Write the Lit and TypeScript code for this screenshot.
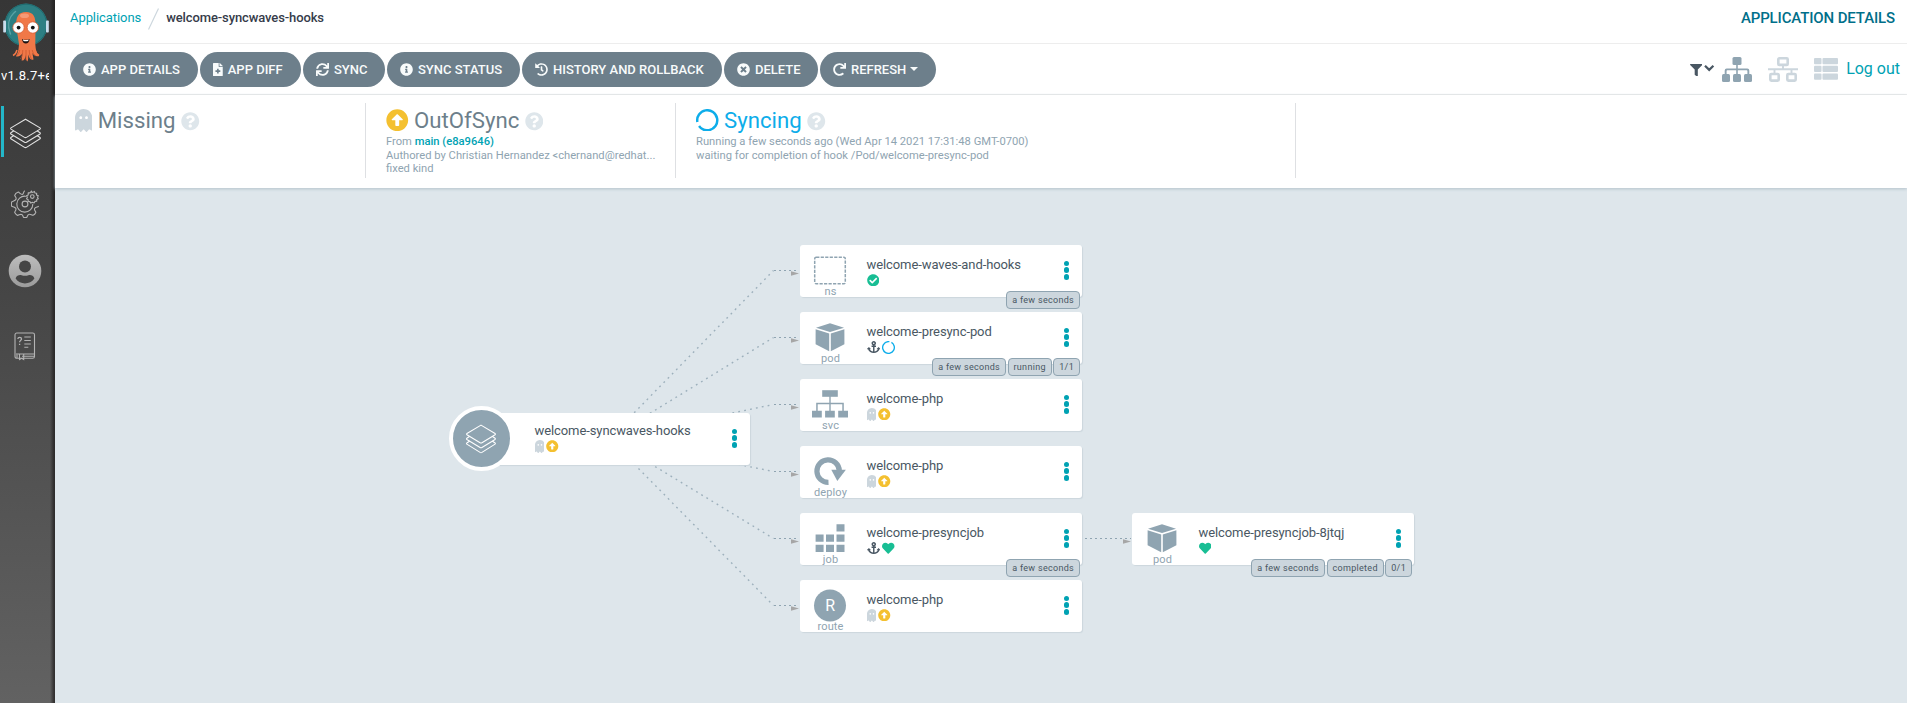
import { LitElement, html, css, svg } from "lit";
import { customElement, property } from "lit/decorators.js";

const ICONS: Record<string, [number, string]> = {
  info: [512, "M256 8C119.043 8 8 119.083 8 256c0 136.997 111.043 248 248 248s248-111.003 248-248C504 119.083 392.957 8 256 8zm0 110c23.196 0 42 18.804 42 42s-18.804 42-42 42-42-18.804-42-42 18.804-42 42-42zm56 254c0 6.627-5.373 12-12 12h-88c-6.627 0-12-5.373-12-12v-24c0-6.627 5.373-12 12-12h12v-64h-12c-6.627 0-12-5.373-12-12v-24c0-6.627 5.373-12 12-12h64c6.627 0 12 5.373 12 12v100h12c6.627 0 12 5.373 12 12v24z"],
  question: [512, "M504 256c0 136.997-111.043 248-248 248S8 392.997 8 256C8 119.083 119.043 8 256 8s248 111.083 248 248zM262.655 90c-54.497 0-89.255 22.957-116.549 63.758-3.536 5.286-2.353 12.415 2.715 16.258l34.699 26.31c5.205 3.947 12.621 3.008 16.665-2.122 17.864-22.658 30.113-35.797 57.303-35.797 20.429 0 45.698 13.148 45.698 32.958 0 14.976-12.363 22.667-32.534 33.976C247.128 238.528 216 254.941 216 296v4c0 6.627 5.373 12 12 12h56c6.627 0 12-5.373 12-12v-1.333c0-28.462 83.186-29.647 83.186-106.667 0-58.002-60.165-102-116.531-102zM256 338c-25.365 0-46 20.635-46 46 0 25.364 20.635 46 46 46s46-20.636 46-46c0-25.365-20.635-46-46-46z"],
  times: [512, "M256 8C119 8 8 119 8 256s111 248 248 248 248-111 248-248S393 8 256 8zm121.6 313.1c4.7 4.7 4.7 12.3 0 17L338 377.6c-4.7 4.7-12.3 4.7-17 0L256 312l-65.1 65.6c-4.7 4.7-12.3 4.7-17 0L134.4 338c-4.7-4.7-4.7-12.3 0-17l65.6-65-65.6-65.1c-4.7-4.7-4.7-12.3 0-17l39.6-39.6c4.7-4.7 12.3-4.7 17 0l65 65.7 65.1-65.6c4.7-4.7 12.3-4.7 17 0l39.6 39.6c4.7 4.7 4.7 12.3 0 17L312 256l65.6 65.1z"],
  up: [512, "M8 256C8 119 119 8 256 8s248 111 248 248-111 248-248 248S8 393 8 256zm292 116V256h70.9c10.7 0 16.1-13 8.5-20.5L264.5 121.2c-4.7-4.7-12.2-4.7-16.9 0l-115 114.3c-7.6 7.6-2.2 20.5 8.5 20.5H212v116c0 6.6 5.4 12 12 12h64c6.6 0 12-5.4 12-12z"],
  check: [512, "M504 256c0 136.967-111.033 248-248 248S8 392.967 8 256 119.033 8 256 8s248 111.033 248 248zM227.314 387.314l184-184c6.248-6.248 6.248-16.379 0-22.627l-22.627-22.627c-6.248-6.249-16.379-6.249-22.628 0L216 308.118l-70.059-70.059c-6.248-6.248-16.379-6.248-22.628 0l-22.627 22.627c-6.248 6.248-6.248 16.379 0 22.627l104 104c6.249 6.249 16.379 6.249 22.628.001z"],
  heart: [512, "M462.3 62.6C407.5 15.9 326 24.3 275.7 76.2L256 96.5l-19.7-20.3C186.1 24.3 104.5 15.9 49.7 62.6c-62.8 53.6-66.1 149.8-9.9 207.9l193.5 199.8c12.5 12.9 32.8 12.9 45.3 0l193.5-199.8c56.3-58.1 53-154.3-9.8-207.9z"],
  anchor: [576, "M12.971 352h32.394C67.172 454.735 181.944 512 288 512c106.229 0 220.853-57.38 242.635-160h32.394c10.691 0 16.045-12.926 8.485-20.485l-67.029-67.029c-4.686-4.686-12.284-4.686-16.971 0l-67.029 67.029c-7.56 7.56-2.206 20.485 8.485 20.485h35.146c-20.29 54.317-84.963 86.588-144.117 94.015V256h52c6.627 0 12-5.373 12-12v-40c0-6.627-5.373-12-12-12h-52v-5.47c37.281-13.226 63.963-48.97 63.996-90.919C384.033 43.24 341.25.133 288.879.001 236.227-.132 193.504 42.511 193.504 95.132c0 42.296 26.994 78.295 64.496 91.398V192h-52c-6.627 0-12 5.373-12 12v40c0 6.627 5.373 12 12 12h52v190.015c-58.936-7.399-123.82-39.679-144.117-94.015h35.146c10.691 0 16.045-12.926 8.485-20.485l-67.029-67.029c-4.686-4.686-12.284-4.686-16.971 0L4.485 331.515C-3.074 339.074 2.28 352 12.971 352zM288 64c17.645 0 32 14.355 32 32s-14.355 32-32 32-32-14.355-32-32 14.355-32 32-32z"],
  ghost: [384, "M186.1.09C81.01 3.24 0 94.92 0 200.05v263.92c0 14.26 17.23 21.39 27.31 11.31l24.92-18.53c6.66-4.95 16-3.99 21.51 2.21l42.95 48.35c6.25 6.25 16.38 6.25 22.63 0l40.72-45.85c6.37-7.17 17.56-7.17 23.92 0l40.72 45.85c6.25 6.25 16.38 6.25 22.63 0l42.95-48.35c5.51-6.2 14.85-7.17 21.51-2.21l24.92 18.53c10.08 10.08 27.31 2.94 27.31-11.31V192C384 84 294.83-3.17 186.1.09zM128 224c-17.67 0-32-14.33-32-32s14.33-32 32-32 32 14.33 32 32-14.33 32-32 32zm128 0c-17.67 0-32-14.33-32-32s14.33-32 32-32 32 14.33 32 32-14.33 32-32 32z"],
  file: [384, "M377 105L279.1 7c-4.5-4.5-10.6-7-17-7H256v128h128v-6.1c0-6.3-2.5-12.4-7-16.9zm-153 31V0H24C10.7 0 0 10.7 0 24v464c0 13.3 10.7 24 24 24h336c13.3 0 24-10.7 24-24V160H248c-13.2 0-24-10.8-24-24zm64 160v48c0 4.400-3.600 8-8 8h-56v56c0 4.400-3.600 8-8 8h-48c-4.400 0-8-3.600-8-8v-56h-56c-4.400 0-8-3.600-8-8v-48c0-4.400 3.600-8 8-8h56v-56c0-4.400 3.600-8 8-8h48c4.400 0 8 3.600 8 8v56h56c4.400 0 8 3.600 8 8z"],
  sync: [512, "M440.65 12.57l4 82.77A247.16 247.16 0 0 0 255.83 8C134.73 8 33.91 94.92 12.29 209.82A12 12 0 0 0 24.09 224h49.05a12 12 0 0 0 11.67-9.26 175.91 175.91 0 0 1 317-56.94l-101.46-4.86a12 12 0 0 0-12.57 12v47.41a12 12 0 0 0 12 12H500a12 12 0 0 0 12-12V12a12 12 0 0 0-12-12h-47.37a12 12 0 0 0-11.98 12.57zM255.83 432a175.61 175.61 0 0 1-146-77.8l101.8 4.87a12 12 0 0 0 12.57-12v-47.4a12 12 0 0 0-12-12H12a12 12 0 0 0-12 12V500a12 12 0 0 0 12 12h47.35a12 12 0 0 0 12-12.6l-4.15-82.57A247.17 247.17 0 0 0 255.83 504c121.11 0 221.93-86.92 243.55-201.82a12 12 0 0 0-11.8-14.18h-49.05a12 12 0 0 0-11.67 9.26A175.86 175.86 0 0 1 255.83 432z"],
  redo: [512, "M500.33 0h-47.41a12 12 0 0 0-12 12.57l4 82.76A247.42 247.42 0 0 0 256 8C119.34 8 7.9 119.53 8 256.19 8.1 393.07 119.1 504 256 504a247.1 247.1 0 0 0 166.18-63.91 12 12 0 0 0 .48-17.43l-34-34a12 12 0 0 0-16.38-.55A176 176 0 1 1 402.1 157.8l-101.53-4.87a12 12 0 0 0-12.57 12v47.41a12 12 0 0 0 12 12h200.33a12 12 0 0 0 12-12V12a12 12 0 0 0-12-12z"],
  history: [512, "M504 255.531c.253 136.64-111.18 248.372-247.82 248.468-59.015.042-113.223-20.53-155.822-54.911-11.077-8.94-11.905-25.541-1.839-35.607l11.267-11.267c8.609-8.609 22.353-9.551 31.891-1.984C173.062 425.135 212.781 440 256 440c101.705 0 184-82.311 184-184 0-101.705-82.311-184-184-184-48.814 0-93.149 18.969-126.068 49.932l50.754 50.754c10.08 10.08 2.941 27.314-11.313 27.314H24c-8.837 0-16-7.163-16-16V38.627c0-14.254 17.234-21.393 27.314-11.314l49.372 49.372C129.209 34.136 189.552 8 256 8c136.81 0 247.747 110.78 248 247.531zm-180.912 78.784l9.823-12.63c8.138-10.463 6.253-25.542-4.21-33.679L288 256.349V152c0-13.255-10.745-24-24-24h-16c-13.255 0-24 10.745-24 24v135.651l65.409 50.874c10.463 8.137 25.541 6.253 33.679-4.21z"],
  filter: [512, "M487.976 0H24.028C2.71 0-8.047 25.866 7.058 40.971L192 225.941V432c0 7.831 3.821 15.17 10.237 19.662l80 55.98C298.02 518.69 320 507.493 320 487.98V225.941l184.947-184.97C520.021 25.896 509.338 0 487.976 0z"],
};

const icon = (name: string, size: number, cls = "") => {
  const [w, d] = ICONS[name];
  return html`<svg class=${"ic " + cls} width=${(size * w) / 512} height=${size} viewBox="0 0 ${w} 512"><path fill="currentColor" d=${d} /></svg>`;
};

const ring = (size: number, sw: number, cls = "", dash = "92 8", rot = 160) => html`
  <svg class=${"ic " + cls} width=${size} height=${size} viewBox="0 0 24 24">
    <circle cx="12" cy="12" r=${12 - sw / 2} fill="none" stroke="currentColor" stroke-width=${sw}
      pathLength="100" stroke-dasharray=${dash} transform="rotate(${rot} 12 12)" />
  </svg>`;

const layers = (size: number) => html`
  <svg class="ic" width=${size} height=${size} viewBox="0 0 32 32" fill="none" stroke="currentColor" stroke-width="1.150" stroke-linejoin="round" stroke-linecap="round">
    <path d="M16 1.200 31 10.200a.8.8 0 0 1 0 1.300L17 20a2 2 0 0 1-2 0L1 11.500a.8.8 0 0 1 0-1.300z" />
    <path d="M3.600 13.400.9 15.200a.8.8 0 0 0 0 1.300L15 25a2 2 0 0 0 2 0l14-8.500a.8.8 0 0 0 0-1.300l-2.700-1.800" />
    <path d="M3.600 18.400.9 20.200a.8.8 0 0 0 0 1.300L15 30.300a2 2 0 0 0 2 0l14-8.800a.8.8 0 0 0 0-1.300l-2.700-1.800" />
  </svg>`;

const kinds: Record<string, unknown> = {
  ns: svg`<rect x="4.700" y="3.200" width="30.600" height="26.600" rx="1.500" fill="none" stroke="#8fa4b1" stroke-width="1.500" stroke-dasharray="3.200 1.300"/>`,
  pod: svg`<g fill="#8fa4b1"><path d="M20 2.300 34 6.700 20 11 6 6.700z"/><path d="M5.600 8.200 19.200 12.400V30.200L5.600 23.200z"/><path d="M34.400 8.200 20.800 12.400V30.200L34.400 23.200z"/></g>`,
  svc: svg`<g fill="#8fa4b1"><path d="M12.200 2.200h15.600v6.600H12.200z"/><path d="M2 22.800h9.800v6.700H2zM15.100 22.800h9.700v6.700h-9.700zM28.200 22.800H38v6.700h-9.800z"/><path d="M19.300 8h1.400v15h-1.400z"/><path d="M6.200 23v-8.300h27.600V23h-1.500v-6.800H7.700V23z"/></g>`,
  deploy: svg`<path d="M18.500 27.300A11.200 11.200 0 1 1 29.300 15.500" fill="none" stroke="#8fa4b1" stroke-width="5.200"/><path d="M21.300 14.800h14.600L27.300 26z" fill="#8fa4b1"/>`,
  job: svg`<g fill="#8fa4b1"><path d="M26.500 2.200h8v7.300h-8zM26.500 12.500h8v7.300h-8zM26.500 22.800h8v7.300h-8zM16 12.500h8v7.300h-8zM16 22.800h8v7.300h-8zM5.600 12.500h8v7.300h-8zM5.600 22.800h8v7.300h-8z"/></g>`,
  route: svg`<circle cx="20" cy="16.500" r="16" fill="#8fa4b1"/><text x="20.200" y="22.200" text-anchor="middle" font-size="16" fill="#fff">R</text>`,
};

interface TreeNode { x: number; y: number; kind: string; name: string; status: string[]; tags: string[] }

const NODES: TreeNode[] = [
  { x: 800, y: 245, kind: "ns", name: "welcome-waves-and-hooks", status: ["check"], tags: ["a few seconds"] },
  { x: 800, y: 312, kind: "pod", name: "welcome-presync-pod", status: ["anchor", "ring"], tags: ["a few seconds", "running", "1/1"] },
  { x: 800, y: 379, kind: "svc", name: "welcome-php", status: ["ghost", "up"], tags: [] },
  { x: 800, y: 446, kind: "deploy", name: "welcome-php", status: ["ghost", "up"], tags: [] },
  { x: 800, y: 513, kind: "job", name: "welcome-presyncjob", status: ["anchor", "heart"], tags: ["a few seconds"] },
  { x: 800, y: 580, kind: "route", name: "welcome-php", status: ["ghost", "up"], tags: [] },
  { x: 1132, y: 513, kind: "pod", name: "welcome-presyncjob-8jtqj", status: ["heart"], tags: ["a few seconds", "completed", "0/1"] },
];
const PANE_X = 55;
const PANE_Y = 188;

const iconCss = css`
  .ic { display: block; flex: none; }
  .ghost { color: #ccd6dd; }
  .up { color: #f4c030; }
  .check, .heart { color: #18be94; }
  .anchor { color: #495763; }
  .ringc { color: #0dadea; }
`;

@customElement("tree-node")
class TreeNodeCard extends LitElement {
  @property({ attribute: false }) node!: TreeNode;
  @property({ type: Boolean }) root = false;

  static styles = [iconCss, css`
    :host { display: block; width: 282px; height: 52px; }
    .card { position: relative; box-sizing: border-box; display: flex; width: 282px; height: 52px; background: #fff; border-radius: 3px; box-shadow: 1px 1px 1px #ccd6dd; }
    .kind { width: 60px; height: 52px; display: flex; flex-direction: column; align-items: center; padding-top: 9px; box-sizing: border-box; font-size: 11px; line-height: 12px; color: #8fa4b1; }
    .kind svg { width: 40px; height: 33px; flex: none; overflow: visible; }
    .kind span { margin-top: -1.500px; letter-spacing: 0.1px; padding-left: 1px; }
    .body { flex: 1; padding: 10.500px 0 0 6.500px; }
    .rootbody { padding-top: 9px; }
    .title { font-size: 13px; line-height: 18px; color: #495763; white-space: nowrap; letter-spacing: -0.09px; }
    .icons { display: flex; gap: 2px; align-items: center; height: 13px; }
    .rootbody .icons { margin-top: -0.500px; }
    .dots { width: 6px; margin: -1.500px 12.500px 0 0; display: flex; flex-direction: column; justify-content: center; gap: 1.100px; }
    .dots i { width: 5.700px; height: 5.700px; border-radius: 50%; background: #00a2b3; }
    .tags { position: absolute; right: 2px; bottom: -12px; display: flex; gap: 1.500px; }
    .tag { height: 18px; box-sizing: border-box; border: 1px solid #8fa4b1; border-radius: 4px; background: #ccd6dd; color: #495763; font-size: 9px; line-height: 16px; padding: 0 5px; white-space: nowrap; letter-spacing: 0.3px; }
    .disc { position: absolute; left: -19.500px; top: -7px; width: 57px; height: 57px; border: 4px solid #fff; border-radius: 50%; background: #8fa4b1; color: #fff; display: flex; align-items: center; justify-content: center; }
  `];

  status(s: string) {
    if (s === "ring") return ring(13, 2.4, "ringc", "92 4 0 4", 300);
    if (s === "ghost") return icon("ghost", 13, "ghost");
    if (s === "anchor") return icon("anchor", 12, "anchor");
    return icon(s, 12.5, s);
  }

  render() {
    const n = this.node;
    return html`<div class="card">
      ${this.root
        ? html`<div class="kind"></div><div class="disc">${layers(30)}</div>`
        : html`<div class="kind"><svg viewBox="0 0 40 33">${kinds[n.kind]}</svg><span>${n.kind}</span></div>`}
      <div class=${this.root ? "body rootbody" : "body"}>
        <div class="title">${n.name}</div>
        <div class="icons">${n.status.map((s) => this.status(s))}</div>
      </div>
      <div class="dots"><i></i><i></i><i></i></div>
      ${n.tags.length ? html`<div class="tags">${n.tags.map((t) => html`<span class="tag">${t}</span>`)}</div>` : ""}
    </div>`;
  }
}

@customElement("side-nav")
class SideNav extends LitElement {
  static styles = css`
    :host { display: flex; flex-direction: column; width: 55px; height: 703px; overflow: hidden; background: linear-gradient(90deg, transparent 0 50px, rgba(30, 28, 28, 0.7) 54px), linear-gradient(#363636, #454545 40%, #626262); color: #fff; }
    svg { display: block; flex: none; }
    .logo { padding-top: 3px; padding-left: 3px; }
    .version { margin: 3px 0 0 1px; width: 48px; overflow: hidden; white-space: nowrap; font-size: 13px; line-height: 20px; letter-spacing: 0.25px; }
    .item { box-sizing: border-box; width: 50px; height: 51px; display: flex; align-items: center; justify-content: center; color: #b4b4b4; }
    .active { width: 49px; margin: 20px 0 0 1px; border-left: 3px solid #23b7c9; color: #e2e2e2; padding: 3px 4px 0 0; }
    .gears { margin-top: 21px; }
    .user { margin-top: 16px; }
    .docs { margin-top: 25px; }
  `;
  render() {
    return html`
      <div class="logo"><svg width="46" height="60" viewBox="0 0 46 60">
        <circle cx="23" cy="22" r="21.500" fill="#2d7f83"/><circle cx="23" cy="22" r="20.800" fill="none" stroke="#1f6b70" stroke-width="1"/>
        <rect x="0.200" y="17.500" width="2.800" height="12" rx=".8" fill="#c9dded"/><rect x="43" y="17.500" width="2.800" height="12" rx=".8" fill="#c9dded"/>
        <path d="M12.500 8.500C4.500 15 4.500 24 7.500 31" fill="none" stroke="#5ba3a6" stroke-width="1.500" stroke-linecap="round"/>
        <path d="M13.300 24C12.500 14 15.500 9 23 9s10 5 9.500 15l-.2 17c.4 6 1.200 9 3.700 12-3 1-5.500-.5-6.600-3.200.3 2.500.8 4.800 1.100 6.700-3 1-4.500-1.500-5.100-5-.2 3-.1 5.500-.9 7-1.600-.8-1.600-3.500-1.800-6.500-.4 3.500-1.600 6-4.100 5.500.2-2.500.8-5 .8-7.500-1 2.500-3.900 4-6.500 3.200 2-3 2.800-6.200 3.100-12.200z" fill="#f07848"/>
        <path d="M14 47c-.8 3-2 4.500-4 5.500M32 47c.8 3 2 4.500 4 5.500" stroke="#f07848" stroke-width="1.500" fill="none"/>
        <path d="M19.800 47c-.2 4-1 7-2.300 9M23 47v10M26.200 47c.2 4 1 7 2.300 9M16.800 47c-.8 3-1.800 5-3.800 6M29.200 47c.8 3 1.800 5 3.800 6" stroke="#c9532c" stroke-width=".7" fill="none"/>
        <ellipse cx="21.500" cy="12.800" rx="4.500" ry="2.300" fill="#f59a76"/>
        <circle cx="15.500" cy="24.500" r="5.700" fill="#fff" stroke="#d6592f" stroke-width=".8"/><circle cx="29.800" cy="24.500" r="5.700" fill="#fff" stroke="#d6592f" stroke-width=".8"/>
        <circle cx="15.600" cy="24.600" r="1.900" fill="#111"/><circle cx="29.800" cy="24.600" r="1.900" fill="#111"/>
        <path d="M19 36q3.700 1.700 7.600 0-.7 4.500-3.800 4.500t-3.800-4.500z" fill="#1b1212"/><path d="M20 36.500q3 1.200 5.600 0l-.4 1.400q-2.500.7-4.800 0z" fill="#fff"/>
      </svg></div>
      <div class="version">v1.8.7+e</div>
      <div class="item active">${layers(31)}</div>
      <div class="item gears"><svg width="28" height="28" viewBox="0 0 28 28" fill="none" stroke="currentColor" stroke-width="1.100" stroke-linejoin="round" stroke-linecap="round">
        <path d="M13.500 1c-1 .5-.8 2.700-1.800 3.300-1.800.6-3.200-1.800-4.400-2.200-1.800.6-3.300 2-3.600 3.200.4 1.500 2 2.300 1.300 4C4.300 11 1.500 11.200.7 12c-.4 1.500-.4 3 0 4.200 1 .8 3.300.4 4.200 2.400.6 1.700-1.300 2.700-1.200 4 .7 1.300 1.700 2.200 2.800 2.800 1.500 0 2.500-1.600 4.200-.9 1.600.8 1.300 3 2.200 3.100h2.600c1-.6.600-2.600 2.200-3.200 1.700-.7 3 1 4.400.9 1.200-.5 2.200-1.700 2.700-2.800-.1-1.500-1.900-2.300-1.200-4 .7-1.700 3-1.400 3.800-2.200"/>
        <path d="M14.500 6.200a8 8 0 1 0 7.300 8"/><circle cx="14" cy="14" r="2.900"/>
        <path d="M20.500 1l.4 1.600 1.600-.7.900-.5.600 1.600 1.700.2-.2 1.700 1.800.9-.8 1.400.8 1.500-1.600.9v1.600l-1.800.2-.8 1.500-1.700-.6-1.500.8-1-1.500-1.800-.2.1-1.700-1.700-.9.900-1.500-.9-1.500 1.700-.9V2.900h1.700z"/><circle cx="21.300" cy="6.600" r="1.800"/>
      </svg></div>
      <div class="item user"><svg width="34" height="34" viewBox="0 0 34 34"><defs><linearGradient id="g" x2="0" y2="1"><stop stop-color="#bdbdbd"/><stop offset="1" stop-color="#9b9b9b"/></linearGradient></defs>
        <circle cx="17" cy="17" r="16.300" fill="url(#g)"/><circle cx="17" cy="12.500" r="6" fill="#454545"/><path d="M7.600 24.500c1-3.500 4-3.700 6-3.300 2 .8 4.800.8 6.800 0 2-.4 5-.2 6 3.300-4.500 6.500-14.300 6.500-18.800 0z" fill="#454545"/></svg></div>
      <div class="item docs"><svg width="22" height="29" viewBox="0 0 22 29" fill="none" stroke="currentColor" stroke-width="1.100">
        <rect x="1" y="1" width="19.500" height="25.300" rx="1.800"/><path d="M2 22h18.500M8 24.200h12"/><path d="M5.500 22v5.500l2.200-1.200 2 1.200V22M3 22.500v3.500"/>
        <path d="M3.800 7c.2-2.300 3.700-2.300 3.700 0 0 1.300-1.900 1.500-1.900 3.200M5.600 11.800v1.300" stroke-width="1.300"/><path d="M10.300 5h6.500M10.300 8.500h6.500M10.300 12h6.500M10.300 15.300h4"/></svg></div>`;
  }
}

@customElement("app-root")
class AppRoot extends LitElement {
  static styles = [iconCss, css`
    :host { display: flex; width: 1907px; height: 703px; overflow: hidden; font-family: Roboto, sans-serif; background: #dee6eb; color: #363c4a; }
    .main { flex: 1; display: flex; flex-direction: column; min-width: 0; }
    .top { height: 43px; box-sizing: content-box; border-bottom: 1px solid #ededed; background: #fff; display: flex; align-items: flex-start; padding: 0 12px 0 15px; }
    .crumb { font-size: 13px; line-height: 18px; padding-top: 9px; color: #00a2b3; letter-spacing: -0.07px; }
    .slash { margin: 8px 7px 0 7px; }
    .here { color: #363c4a; font-weight: 500; letter-spacing: -0.11px; }
    .pagetitle { margin-left: auto; padding-top: 8px; font-size: 15px; line-height: 20px; font-weight: 500; color: #006f8a; letter-spacing: -0.13px; }
    .bar { height: 50px; border-bottom: 1px solid #ededed; background: #fff; display: flex; align-items: center; padding: 0 7px 0 15px; }
    .buttons { display: flex; gap: 2px; }
    .btn { box-sizing: border-box; height: 35px; border-radius: 18px; background: #6d7f8b; color: #f8fbfb; display: flex; align-items: center; padding-left: 13px; gap: 5px; font-size: 13px; font-weight: 500; white-space: nowrap; }
    .caret { border: 4px solid transparent; border-top-color: currentColor; border-bottom: 0; margin-left: -1px; }
    .views { margin-left: auto; display: flex; align-items: center; }
    .dark { color: #495763; }
    .funnel { margin: 2px 1px 0 0; }
    .mid { color: #8fa4b1; margin-left: 7px; }
    .pale { color: #ccd6dd; margin-left: 16px; }
    .logout { font-size: 16px; color: #00a2b3; margin-left: 8px; line-height: 20px; }
    .status { height: 93px; background: #fff; display: flex; position: relative; box-shadow: 0 1px 3px #b4c2cb; padding-top: 8px; box-sizing: border-box; }
    .cell { box-sizing: border-box; height: 75px; border-right: 1px solid #dee0e3; padding-left: 20px; color: #6d7f8b; }
    .head { display: flex; align-items: center; height: 34px; font-size: 22.200px; line-height: 34px; margin-bottom: -2px; }
    .head span { padding: 0 5.500px 0 5.500px; }
    .help { color: #dee6eb; margin-top: 3px; }
    .note { font-size: 11.200px; line-height: 13.500px; color: #8fa4b1; white-space: nowrap; }
    .note b { font-weight: 500; color: #00a2b3; }
    .blue { color: #0dadea; }
    .canvas { flex: 1; position: relative; }
    .edges { position: absolute; inset: 0; }
    .place { position: absolute; }
  `];

  render() {
    const btn = (w: number, ic: string, label: string, caret = false) => html`
      <div class="btn" style="width:${w}px">${icon(ic, 13)}<span>${label}</span>${caret ? html`<i class="caret"></i>` : ""}</div>`;
    const ys = [270.5, 337.5, 404.5, 471.5, 538.5, 605.5];
    const arrow = (x: number, y: number) => svg`<path d="M${x} ${y + 0.7}l8 2.300-8 2.300z" fill="#a6a6a6"/>`;
    return html`
      <side-nav></side-nav>
      <div class="main">
        <div class="top">
          <div class="crumb">Applications</div>
          <svg class="ic slash" width="11" height="22" viewBox="0 0 11 22"><path d="M.5 21.500 10.500.5" stroke="#ccd6dd" stroke-width="1.200" /></svg>
          <div class="crumb here">welcome-syncwaves-hooks</div>
          <div class="pagetitle">APPLICATION DETAILS</div>
        </div>
        <div class="bar">
          <div class="buttons">
            ${btn(128, "info", "APP DETAILS")}${btn(101, "file", "APP DIFF")}${btn(82, "sync", "SYNC")}${btn(133, "info", "SYNC STATUS")}${btn(200, "history", "HISTORY AND ROLLBACK")}${btn(94, "times", "DELETE")}${btn(116, "redo", "REFRESH", true)}
          </div>
          <div class="views">
            ${icon("filter", 12.5, "dark funnel")}
            <svg class="ic dark" width="12" height="12" viewBox="0 0 12 12"><path d="M2 2.700l4.200 4.200 4.200-4.200" fill="none" stroke="currentColor" stroke-width="2.200"/></svg>
            <svg class="ic mid" width="30" height="25" viewBox="0 0 30 25" fill="currentColor"><rect x="10.500" y="0" width="9" height="8" rx="1.500"/><rect x="0" y="17" width="8" height="8" rx="1.500"/><rect x="11" y="17" width="8" height="8" rx="1.500"/><rect x="22" y="17" width="8" height="8" rx="1.500"/><path d="M14.200 8h1.600v9h-1.600z"/><path d="M2.700 17v-3.500a2 2 0 0 1 2-2h20.600a2 2 0 0 1 2 2V17h-1.900v-3a.7.7 0 0 0-.7-.7h-19.400a.7.7 0 0 0-.7.7V17z"/></svg>
            <svg class="ic pale" width="30" height="25" viewBox="0 0 30 25" fill="none" stroke="currentColor" stroke-width="2.600"><rect x="10.300" y="1.300" width="9.400" height="6.600" rx="1"/><rect x="2.300" y="17" width="8.400" height="6.600" rx="1"/><rect x="19.300" y="17" width="8.400" height="6.600" rx="1"/><path d="M0 12.300h30M15 8.500v4M6.500 12.500v4M23.500 12.500v4" stroke-width="1.900"/></svg>
            <svg class="ic pale" width="24" height="22" viewBox="0 0 24 22" fill="currentColor"><rect width="7.500" height="6.300" rx="1"/><rect x="8.500" width="15.500" height="6.300" rx="1"/><rect y="7.700" width="7.500" height="6.300" rx="1"/><rect x="8.500" y="7.700" width="15.500" height="6.300" rx="1"/><rect y="15.500" width="7.500" height="6.300" rx="1"/><rect x="8.500" y="15.500" width="15.500" height="6.300" rx="1"/></svg>
            <span class="logout">Log out</span>
          </div>
        </div>
        <div class="status">
          <div class="cell" style="width:311px"><div class="head">${icon("ghost", 23, "ghost")}<span>Missing</span>${icon("question", 18.5, "help")}</div></div>
          <div class="cell" style="width:310px">
            <div class="head">${icon("up", 22.5, "up")}<span>OutOfSync</span>${icon("question", 18.5, "help")}</div>
            <div class="note">From <b>main (e8a9646)</b></div>
            <div class="note">Authored by Christian Hernandez &lt;chernand@redhat...</div>
            <div class="note">fixed kind</div>
          </div>
          <div class="cell" style="width:620px">
            <div class="head blue">${ring(22.5, 2.6, "", "93 7", 170)}<span>Syncing</span>${icon("question", 18.5, "help")}</div>
            <div class="note">Running a few seconds ago (Wed Apr 14 2021 17:31:48 GMT-0700)</div>
            <div class="note">waiting for completion of hook /Pod/welcome-presync-pod</div>
          </div>
        </div>
        <div class="canvas">
          <svg class="edges" width="1852" height="515" viewBox="55 188 1852 515">
            ${ys.map((y) => svg`<path d="M609 438.500L773.500 ${y}" stroke="#9db0bc" stroke-width="1.400" stroke-dasharray="1.800 4.200" fill="none"/><path d="M774 ${y}H799" stroke="#8fa4b1" stroke-width="1" stroke-dasharray="2 3"/>${arrow(791, y)}`)}
            <path d="M1085 538.500H1131" stroke="#8fa4b1" stroke-width="1" stroke-dasharray="2 3"/>${arrow(1123, 538.5)}
          </svg>
          <tree-node class="place" style="left:${468 - PANE_X}px;top:${413 - PANE_Y}px" root .node=${{ x: 468, y: 413, kind: "", name: "welcome-syncwaves-hooks", status: ["ghost", "up"], tags: [] }}></tree-node>
          ${NODES.map((n) => html`<tree-node class="place" style="left:${n.x - PANE_X}px;top:${n.y - PANE_Y}px" .node=${n}></tree-node>`)}
        </div>
      </div>`;
  }
}
